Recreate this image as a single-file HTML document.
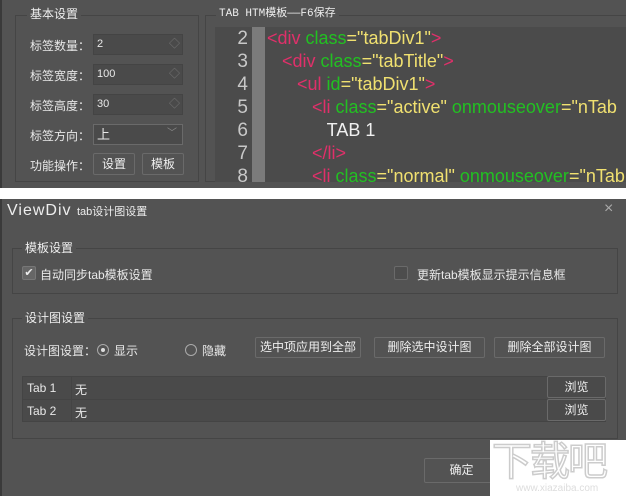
<!DOCTYPE html>
<html><head><meta charset="utf-8"><style>
*{margin:0;padding:0;box-sizing:border-box}
body{width:626px;height:496px;background:#fff;position:relative;overflow:hidden;font-family:"Liberation Sans","Noto Sans CJK SC",sans-serif;color:#e8e8e8;font-size:12px}
.a{position:absolute;white-space:nowrap}
.top{left:0;top:0;width:626px;height:188px;background:#535353;border-left:2px solid #3a3a3a}
.gb{position:absolute;border:1px solid #454545}
.gt{position:absolute;background:#535353;padding:0 3px;font-size:12px;color:#eee;line-height:14px}
.inp{position:absolute;left:91px;width:90px;height:21px;border:1px solid #444;background:#4a4a4a;font-size:11px;line-height:19px;padding-left:3px}
.btn{position:absolute;border:1px solid #6a6a6a;border-radius:2px;text-align:center;font-size:12px;color:#eee;white-space:nowrap}
.code{left:213px;top:27px;width:413px;height:155px;background:#4b4b4b;overflow:hidden}
.ln{position:absolute;left:0;width:33px;text-align:right;color:#c8c8c8;font-size:19px}
.gut{position:absolute;left:37px;top:0;width:13px;height:160px;background:#7b7b7b}
.cl{position:absolute;left:52px;white-space:pre;font-size:18px}
.r{color:#e0306a}.g{color:#22c022}.y{color:#f0e070}.w{color:#f0f0f0}
.dlg{left:0;top:199px;width:626px;height:297px;background:#535353;border-left:2px solid #3a3a3a}
</style></head><body>
<div class="a top">
 <div class="gb" style="left:13px;top:15px;width:184px;height:167px"></div>
 <div class="gt" style="left:25px;top:7px">基本设置</div>
 <div class="a" style="left:28px;top:37px">标签数量：</div>
 <div class="a" style="left:28px;top:67px">标签宽度：</div>
 <div class="a" style="left:28px;top:97px">标签高度：</div>
 <div class="a" style="left:28px;top:127px">标签方向：</div>
 <div class="a" style="left:28px;top:157px">功能操作：</div>
 <div class="inp" style="top:34px">2<span style="position:absolute;right:2px;top:0;color:#777">◇</span></div>
 <div class="inp" style="top:64px">100<span style="position:absolute;right:2px;top:0;color:#777">◇</span></div>
 <div class="inp" style="top:94px">30<span style="position:absolute;right:2px;top:0;color:#777">◇</span></div>
 <div class="inp" style="top:124px;border-color:#6a6a6a;font-size:13px">上<span style="position:absolute;right:5px;top:-1px;color:#888;font-size:10px">﹀</span></div>
 <div class="btn" style="left:91px;top:153px;width:42px;height:22px;line-height:20px">设置</div>
 <div class="btn" style="left:140px;top:153px;width:42px;height:22px;line-height:20px">模板</div>
 <div class="gb" style="left:203px;top:15px;width:430px;height:167px"></div>
 <div class="gt" style="left:214px;top:7px;font-family:'Liberation Mono','Noto Sans CJK SC',monospace;font-size:11px">TAB HTM模板——F6保存</div>
 <div class="a code">
  <div class="gut"></div>
  <div class="ln" style="top:1px">2</div><div class="ln" style="top:24px">3</div><div class="ln" style="top:47px">4</div><div class="ln" style="top:70px">5</div><div class="ln" style="top:93px">6</div><div class="ln" style="top:116px">7</div><div class="ln" style="top:139px">8</div>
  <div class="cl" style="top:1px"><span class="r">&lt;div </span><span class="g">class</span><span class="y">="tabDiv1"</span><span class="r">&gt;</span></div>
  <div class="cl" style="top:24px">   <span class="r">&lt;div </span><span class="g">class</span><span class="y">="tabTitle"</span><span class="r">&gt;</span></div>
  <div class="cl" style="top:47px">      <span class="r">&lt;ul </span><span class="g">id</span><span class="y">="tabDiv1"</span><span class="r">&gt;</span></div>
  <div class="cl" style="top:70px">         <span class="r">&lt;li </span><span class="g">class</span><span class="y">="active" </span><span class="g">onmouseover</span><span class="y">="nTab</span></div>
  <div class="cl w" style="top:93px">            TAB 1</div>
  <div class="cl" style="top:116px">         <span class="r">&lt;/li&gt;</span></div>
  <div class="cl" style="top:139px">         <span class="r">&lt;li </span><span class="g">class</span><span class="y">="normal" </span><span class="g">onmouseover</span><span class="y">="nTab</span></div>
 </div>
</div>
<div class="a dlg">
 <div class="a" style="left:5px;top:3px;font-size:16px;letter-spacing:1px;color:#eee">ViewDiv <span style="font-size:11px;letter-spacing:0">tab设计图设置</span></div>
 <div class="a" style="left:602px;top:1px;font-size:16px;color:#aaa">×</div>
 <div class="gb" style="left:10px;top:49px;width:606px;height:46px"></div>
 <div class="gt" style="left:20px;top:42px">模板设置</div>
 <div class="a" style="left:20px;top:67px;width:14px;height:14px;border:1px solid #777;background:#666;border-radius:2px;font-size:11px;line-height:12px;text-align:center;color:#eee">✔</div>
 <div class="a" style="left:38px;top:67px">自动同步tab模板设置</div>
 <div class="a" style="left:392px;top:67px;width:14px;height:14px;border:1px solid #6a6a6a;border-radius:2px;background:#4d4d4d"></div>
 <div class="a" style="left:415px;top:67px">更新tab模板显示提示信息框</div>
 <div class="gb" style="left:10px;top:119px;width:606px;height:121px"></div>
 <div class="gt" style="left:20px;top:112px">设计图设置</div>
 <div class="a" style="left:22px;top:143px">设计图设置：</div>
 <div class="a" style="left:95px;top:145px;width:12px;height:12px;border:1px solid #aaa;border-radius:50%"><div class="a" style="left:3px;top:3px;width:4px;height:4px;background:#ddd;border-radius:50%"></div></div>
 <div class="a" style="left:112px;top:143px">显示</div>
 <div class="a" style="left:183px;top:145px;width:12px;height:12px;border:1px solid #aaa;border-radius:50%"></div>
 <div class="a" style="left:200px;top:143px">隐藏</div>
 <div class="btn" style="left:253px;top:138px;width:106px;height:21px;line-height:19px">选中项应用到全部</div>
 <div class="btn" style="left:372px;top:138px;width:111px;height:21px;line-height:19px">删除选中设计图</div>
 <div class="btn" style="left:492px;top:138px;width:111px;height:21px;line-height:19px">删除全部设计图</div>
 <div class="a" style="left:20px;top:177px;width:584px;height:46px;background:#4a4a4a;border:1px solid #444"></div>
 <div class="a" style="left:20px;top:200px;width:584px;height:1px;background:#444"></div>
 <div class="a" style="left:69px;top:177px;width:1px;height:46px;background:#444"></div>
 <div class="a" style="left:25px;top:182px">Tab 1</div><div class="a" style="left:73px;top:182px">无</div>
 <div class="a" style="left:25px;top:205px">Tab 2</div><div class="a" style="left:73px;top:205px">无</div>
 <div class="btn" style="left:545px;top:177px;width:59px;height:22px;line-height:20px">浏览</div>
 <div class="btn" style="left:545px;top:200px;width:59px;height:22px;line-height:20px">浏览</div>
 <div class="btn" style="left:422px;top:259px;width:75px;height:25px;line-height:23px">确定</div>
</div>
<div class="a" style="left:490px;top:440px;width:136px;height:56px;background:#fff;overflow:hidden">
 <div class="a" style="left:2px;top:0px;font-size:40px;line-height:44px;color:#fff;-webkit-text-stroke:1.5px #ccc;letter-spacing:-2px">下载吧</div>
 <div class="a" style="left:26px;top:43px;font-size:10px;color:#ddd">www.xiazaiba.com</div>
</div>
</body></html>
